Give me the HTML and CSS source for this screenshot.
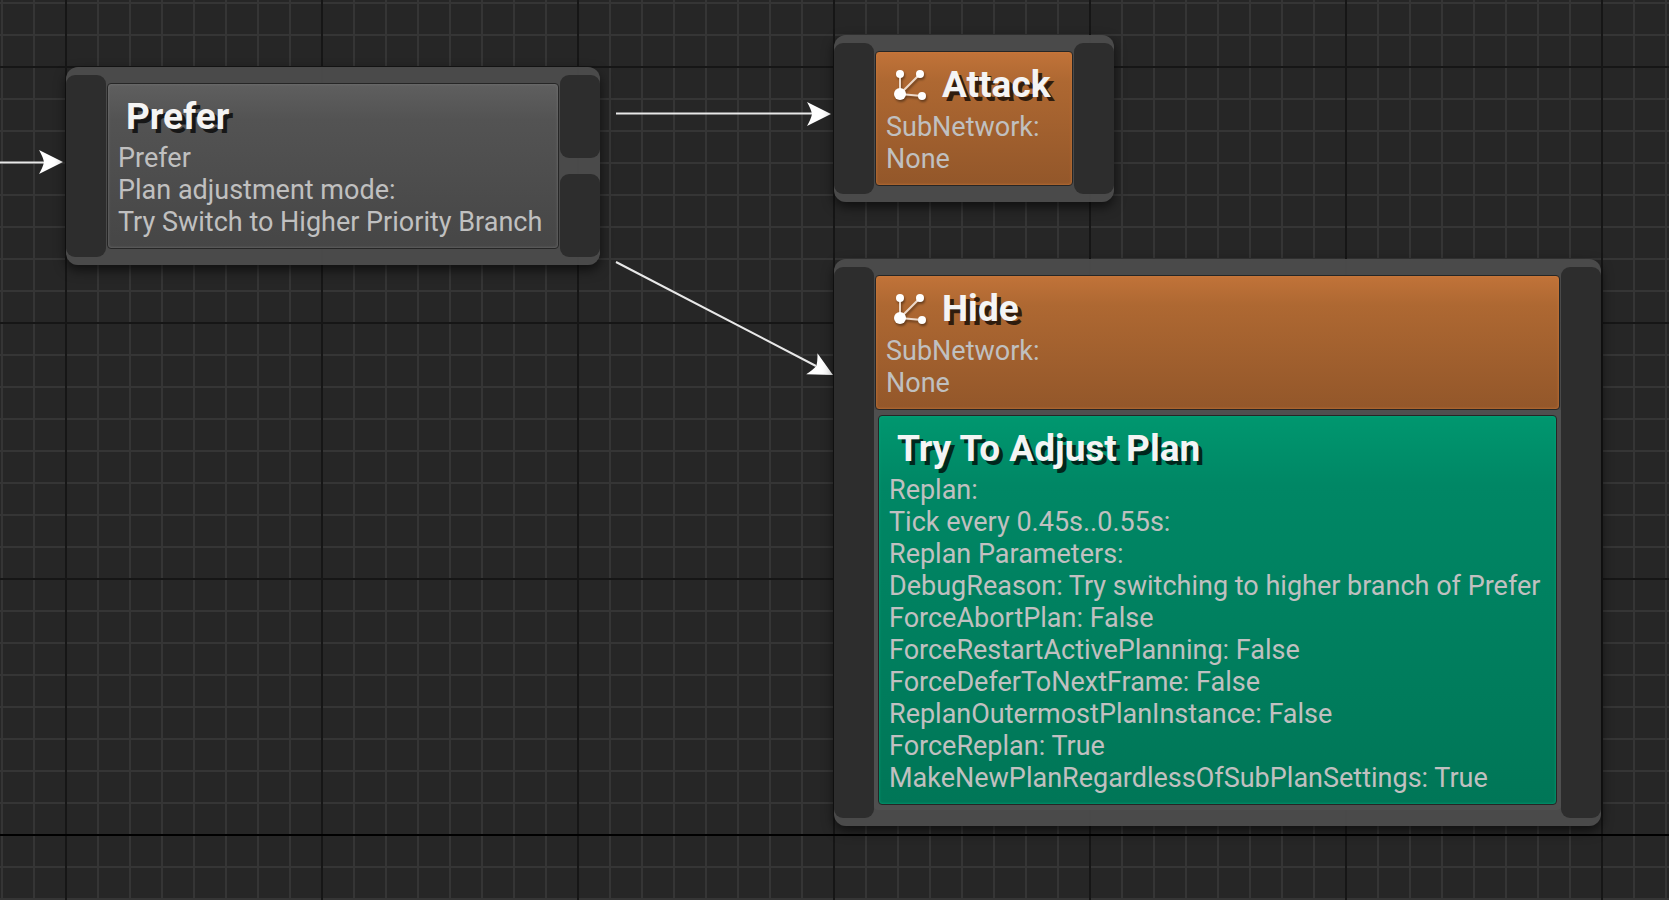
FILE: index.html
```html
<!DOCTYPE html>
<html lang="en">
<head>
<meta charset="utf-8">
<title>HTN Graph</title>
<link rel="stylesheet" href="styles.css">
</head>
<body>
<main class="canvas">
  <svg class="wires" aria-hidden="true">
    <defs>
      <path id="arrow" d="M0 0L-24 -12Q-20 -5 -19 0Q-20 5 -24 12Z"/>
      <g id="subnetwork">
        <path d="M7 28V8M7 28L27 8M7 28L29 30"/>
        <circle cx="7" cy="8" r="4"/><circle cx="27" cy="8" r="4"/>
        <circle cx="7" cy="28" r="6"/><circle cx="29" cy="30" r="4"/>
      </g>
    </defs>
    <path class="wire" d="M0 162.500H48M616 113.500H816M616 262L816 366"/>
    <g class="heads">
      <use href="#arrow" transform="translate(63 162)"/>
      <use href="#arrow" transform="translate(831 114)"/>
      <use href="#arrow" transform="translate(833 375) rotate(28)"/>
    </g>
  </svg>

  <article class="node node-prefer">
    <div class="pins"><span class="pin"></span></div>
    <div class="stack">
      <section class="card card-gray">
        <h2 class="title">Prefer</h2>
        <p class="line">Prefer</p>
        <p class="line">Plan adjustment mode:</p>
        <p class="line">Try Switch to Higher Priority Branch</p>
      </section>
    </div>
    <div class="pins"><span class="pin"></span><span class="pin"></span></div>
  </article>

  <article class="node node-attack">
    <div class="pins"><span class="pin"></span></div>
    <div class="stack">
      <section class="card card-orange">
        <h2 class="title title-icon"><svg class="icon" viewBox="1 0 36 38" aria-hidden="true"><use href="#subnetwork"/></svg>Attack</h2>
        <p class="line">SubNetwork:</p>
        <p class="line">None</p>
      </section>
    </div>
    <div class="pins"><span class="pin"></span></div>
  </article>

  <article class="node node-hide">
    <div class="pins"><span class="pin"></span></div>
    <div class="stack">
      <section class="card card-orange">
        <h2 class="title title-icon"><svg class="icon" viewBox="1 0 36 38" aria-hidden="true"><use href="#subnetwork"/></svg>Hide</h2>
        <p class="line">SubNetwork:</p>
        <p class="line">None</p>
      </section>
      <div class="services">
        <section class="card card-green">
          <h2 class="title">Try To Adjust Plan</h2>
          <p class="line">Replan:</p>
          <p class="line">Tick every 0.45s..0.55s:</p>
          <p class="line">Replan Parameters:</p>
          <p class="line">DebugReason: Try switching to higher branch of Prefer</p>
          <p class="line">ForceAbortPlan: False</p>
          <p class="line">ForceRestartActivePlanning: False</p>
          <p class="line">ForceDeferToNextFrame: False</p>
          <p class="line">ReplanOutermostPlanInstance: False</p>
          <p class="line">ForceReplan: True</p>
          <p class="line">MakeNewPlanRegardlessOfSubPlanSettings: True</p>
        </section>
      </div>
    </div>
    <div class="pins"><span class="pin"></span></div>
  </article>
</main>
</body>
</html>
```
FILE: styles.css
```css
* { box-sizing: border-box; }

body {
  margin: 0;
  font-family: Roboto, "Liberation Sans", sans-serif;
}

.canvas {
  position: relative;
  min-height: 100vh;
  overflow: hidden;
  background-color: #262626;
  background-image:
    linear-gradient(#000 2px, transparent 2px),
    linear-gradient(#161616 2px, transparent 2px),
    linear-gradient(90deg, #161616 2px, transparent 2px),
    linear-gradient(#353535 2px, transparent 2px),
    linear-gradient(90deg, #353535 2px, transparent 2px);
  background-size: 100% 2048px, 100% 256px, 256px 100%, 100% 32px, 32px 100%;
  background-position: 0 834px, 0 66px, 65px 0, 0 2px, 1px 0;
}

.wires {
  position: absolute;
  inset: 0;
  width: 100%;
  height: 100%;
}

.wire { fill: none; stroke: #e8e8e8; stroke-width: 2; }
.heads { fill: #fff; }

.node {
  position: absolute;
  display: grid;
  grid-template-columns: 40px auto 40px;
  border-radius: 12px;
  background: rgba(76, 76, 76, 0.95);
  box-shadow: 0 5px 12px rgba(0, 0, 0, 0.6);
}

.node-prefer { left: 66px; top: 67px; }
.node-attack { left: 834px; top: 35px; }
.node-hide { left: 834px; top: 259px; }

.pins {
  display: flex;
  flex-direction: column;
  gap: 16px;
  padding: 8px 0;
}

.pin {
  flex: 1;
  border-radius: 9px;
  background: #2d2d2d;
}

.stack { padding: 16px 1px; }

.card {
  padding: 11px 16px 10px 10px;
  border: 1px solid #262626;
  border-radius: 4px;
}

.card-gray {
  background: linear-gradient(#5f5f5f, #535353 22%, #464646);
  box-shadow: inset 0 0 3px #777;
}

.card-orange {
  background: linear-gradient(#c17339, #ae6832 22%, #93572a);
  box-shadow: inset 0 0 3px #cf7a3a;
}

.card-green {
  background: linear-gradient(#00976f, #008765 18%, #007657);
  box-shadow: inset 0 0 3px #00a87a;
}

.services {
  margin: 0 -1px;
  padding: 5px 4px;
  border-radius: 0 0 4px 4px;
  background: #4f4f4f;
}

.title {
  margin: 0;
  padding: 0 8px 3px;
  color: #f4f4f4;
  font-size: 37px;
  font-weight: 700;
  line-height: 44px;
  text-shadow: 4px 4px 0 rgba(0, 0, 0, 0.72);
  white-space: nowrap;
}

.title-icon {
  display: flex;
  align-items: center;
  gap: 12px;
  padding: 0 6px 4px 8px;
}

.icon {
  width: 36px;
  height: 38px;
  fill: #fff;
  stroke: none;
  filter: drop-shadow(1px 2px 1px rgba(0, 0, 0, 0.4));
}

#subnetwork path { stroke: #ecd9ca; stroke-width: 2; }

.line {
  margin: 0;
  color: #c0c0c0;
  font-size: 27px;
  line-height: 32px;
  white-space: nowrap;
}
```
